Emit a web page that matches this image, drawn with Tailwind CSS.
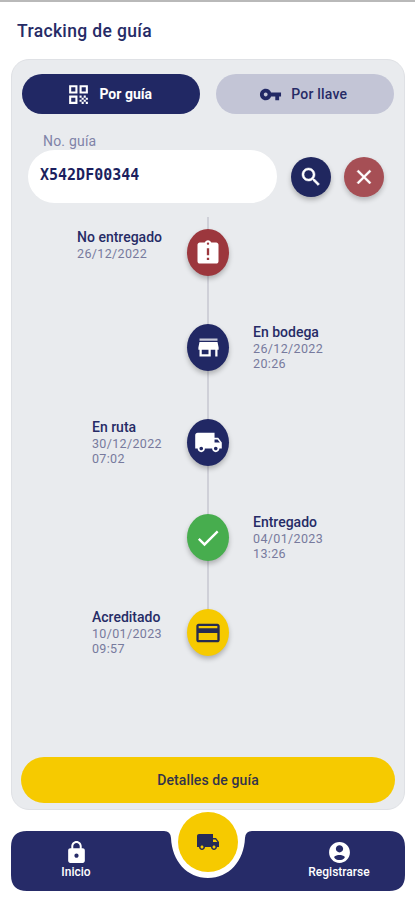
<!DOCTYPE html>
<html lang="es">
<head>
<meta charset="utf-8">
<meta name="viewport" content="width=device-width, initial-scale=1">
<title>Tracking de guía</title>
<script src="https://cdn.jsdelivr.net/npm/@tailwindcss/browser@4"></script>
</head>
<body class="bg-white">
<div class="flex h-[900px] w-[415px] flex-col overflow-hidden border-t-2 border-[#b9b9b9] bg-white font-[Roboto,sans-serif] text-[#262b66]">
  <header class="flex h-[57px] shrink-0 items-center pt-px pl-[17px]">
    <h1 class="text-[17.5px] leading-5 font-medium tracking-[0.35px] whitespace-nowrap">Tracking de guía</h1>
  </header>

  <main class="mx-[11px] flex h-[751px] w-[394px] shrink-0 flex-col rounded-[18px] border border-[#dfe1e5] bg-[#e9ebee] px-[10px] pt-[14px] pb-[6px]">
    <div class="flex gap-4">
      <button class="flex h-10 w-[178px] items-center justify-center gap-2 rounded-full bg-[#212864] pr-[3px] text-[14px] font-bold text-white">
        <svg class="size-[25px]" viewBox="0 0 24 24" fill="currentColor"><path d="M3 11h8V3H3v8zm2-6h4v4H5V5zM3 21h8v-8H3v8zm2-6h4v4H5v-4zM13 3v8h8V3h-8zm6 6h-4V5h4v4zM19 19h2v2h-2zM13 13h2v2h-2zM15 15h2v2h-2zM13 17h2v2h-2zM15 19h2v2h-2zM17 17h2v2h-2zM17 13h2v2h-2zM19 15h2v2h-2z"/></svg>
        <span>Por guía</span>
      </button>
      <button class="flex h-10 w-[179px] items-center justify-center gap-[9px] rounded-full bg-[#c3c5d6] pr-[3px] text-[14px] font-medium tracking-[0.2px]">
        <svg class="size-[23px]" viewBox="0 0 24 24" fill="#212864"><path d="M12.65 10C11.83 7.67 9.61 6 7 6c-3.31 0-6 2.69-6 6s2.69 6 6 6c2.61 0 4.83-1.67 5.65-4H17v4h4v-4h2v-4H12.65zM7 14c-1.100 0-2-.9-2-2s.9-2 2-2 2 .9 2 2-.9 2-2 2z"/></svg>
        <span>Por llave</span>
      </button>
    </div>

    <label class="mt-[19px] mb-px ml-[21px] text-[14px] leading-4 tracking-[0.2px] text-[#8083a8]">No. guía</label>
    <div class="ml-[6px] flex items-center">
      <div class="flex h-[53px] w-[249px] items-center rounded-full bg-white pb-[2px] pl-3 font-['DejaVu_Sans_Mono',monospace] text-[15px] font-bold text-[#1b1f5e]">X542DF00344</div>
      <button class="ml-[14px] flex size-10 items-center justify-center rounded-full bg-[#20275f] text-white shadow-[0_3px_5px_rgba(0,0,0,0.25)]">
        <svg class="size-6" viewBox="0 0 24 24" fill="currentColor" stroke="currentColor" stroke-width=".5"><path d="M15.500 14h-.79l-.28-.27C15.410 12.590 16 11.110 16 9.500 16 5.910 13.090 3 9.500 3S3 5.910 3 9.500 5.910 16 9.500 16c1.610 0 3.090-.59 4.230-1.570l.27.28v.79l5 4.990L20.490 19l-4.990-5zm-6 0C7.010 14 5 11.990 5 9.500S7.010 5 9.500 5 14 7.010 14 9.500 11.990 14 9.500 14z"/></svg>
      </button>
      <button class="ml-[13px] flex size-10 items-center justify-center rounded-full bg-[#a64f55] text-white shadow-[0_3px_5px_rgba(0,0,0,0.22)]">
        <svg class="size-6" viewBox="0 0 24 24" fill="currentColor" stroke="currentColor" stroke-width=".4"><path d="M19 6.410L17.590 5 12 10.590 6.410 5 5 6.410 10.590 12 5 17.590 6.410 19 12 13.410 17.590 19 19 17.590 13.410 12 19 6.410z"/></svg>
      </button>
    </div>

    <section class="relative mt-[14px] flex flex-col text-[12.500px] leading-[15.500px]">
      <div class="absolute top-0 left-[185px] h-[415px] w-[2px] bg-[#cfd0d8]"></div>

      <div class="relative mt-3 grid h-[95px] grid-cols-[140px_42px_1fr] items-start gap-x-[25px]">
        <div class="justify-self-end pt-px">
          <p class="text-[14px] font-medium">No entregado</p>
          <p class="tracking-[0.35px] text-[#777a9d]">26/12/2022</p>
        </div>
        <div class="flex h-[47px] items-center justify-center rounded-[50%] bg-[#9c373d] shadow-[0_3px_5px_rgba(0,0,0,0.25)]">
          <svg class="size-7" viewBox="0 0 24 24" fill="#fff"><path d="M19 3h-4.180C14.400 1.840 13.300 1 12 1c-1.300 0-2.400.84-2.820 2H5c-1.100 0-2 .9-2 2v14c0 1.100.9 2 2 2h14c1.100 0 2-.9 2-2V5c0-1.100-.9-2-2-2zm-6 15h-2v-2h2v2zm0-4h-2V8h2v6zm-1-9c-.55 0-1-.45-1-1s.45-1 1-1 1 .45 1 1-.45 1-1 1z"/></svg>
        </div>
      </div>

      <div class="relative grid h-[95px] grid-cols-[140px_42px_1fr] items-start gap-x-[25px]">
        <div></div>
        <div class="flex h-[47px] items-center justify-center rounded-[50%] bg-[#212864] shadow-[0_3px_5px_rgba(0,0,0,0.25)]">
          <svg class="size-[27px]" viewBox="0 0 24 24" fill="#fff"><path d="M4 4h16v2H4z" opacity=".75"/><path d="M21 14v-2l-1-5H4l-1 5v2h1v6h10v-6h4v6h2v-6h1zm-9 4H6v-4h6v4z"/></svg>
        </div>
        <div class="-ml-px pt-px">
          <p class="text-[14px] font-medium">En bodega</p>
          <p class="tracking-[0.35px] text-[#777a9d]">26/12/2022</p>
          <p class="tracking-[0.35px] text-[#777a9d]">20:26</p>
        </div>
      </div>

      <div class="relative grid h-[95px] grid-cols-[140px_42px_1fr] items-start gap-x-[25px]">
        <div class="justify-self-end pt-px">
          <p class="text-[14px] font-medium">En ruta</p>
          <p class="tracking-[0.35px] text-[#777a9d]">30/12/2022</p>
          <p class="tracking-[0.35px] text-[#777a9d]">07:02</p>
        </div>
        <div class="flex h-[47px] items-center justify-center rounded-[50%] bg-[#212864] shadow-[0_3px_5px_rgba(0,0,0,0.25)]">
          <svg class="size-[29px]" viewBox="0 0 24 24" fill="#fff"><path d="M20 8h-3V4H3c-1.100 0-2 .9-2 2v11h2c0 1.660 1.340 3 3 3s3-1.340 3-3h6c0 1.660 1.340 3 3 3s3-1.340 3-3h2v-5l-3-4zM6 18.500c-.83 0-1.500-.67-1.500-1.500s.67-1.500 1.500-1.500 1.500.67 1.500 1.500-.67 1.500-1.500 1.500zm13.500-9l1.960 2.500H17V9.500h2.500zm-1.500 9c-.83 0-1.500-.67-1.500-1.500s.67-1.500 1.500-1.500 1.500.67 1.500 1.500-.67 1.500-1.500 1.500z"/></svg>
        </div>
      </div>

      <div class="relative grid h-[95px] grid-cols-[140px_42px_1fr] items-start gap-x-[25px]">
        <div></div>
        <div class="flex h-[47px] items-center justify-center rounded-[50%] bg-[#47ad4e] shadow-[0_3px_5px_rgba(0,0,0,0.25)]">
          <svg class="size-7" viewBox="0 0 24 24" fill="#fff"><path d="M9 16.170L4.830 12l-1.420 1.410L9 19 21 7l-1.410-1.410z"/></svg>
        </div>
        <div class="-ml-px pt-px">
          <p class="text-[14px] font-medium">Entregado</p>
          <p class="tracking-[0.35px] text-[#777a9d]">04/01/2023</p>
          <p class="tracking-[0.35px] text-[#777a9d]">13:26</p>
        </div>
      </div>

      <div class="relative grid h-[47px] grid-cols-[140px_42px_1fr] items-start gap-x-[25px]">
        <div class="justify-self-end pt-px">
          <p class="text-[14px] font-medium">Acreditado</p>
          <p class="tracking-[0.35px] text-[#777a9d]">10/01/2023</p>
          <p class="tracking-[0.35px] text-[#777a9d]">09:57</p>
        </div>
        <div class="flex h-[47px] items-center justify-center rounded-[50%] bg-[#f6ca00] shadow-[0_3px_5px_rgba(0,0,0,0.25)]">
          <svg class="size-7" viewBox="0 0 24 24" fill="#262b50"><path d="M20 4H4c-1.110 0-1.990.89-1.990 2L2 18c0 1.110.89 2 2 2h16c1.110 0 2-.89 2-2V6c0-1.110-.89-2-2-2zm0 14H4v-6h16v6zm0-10H4V6h16v2z"/></svg>
        </div>
      </div>
    </section>

    <button class="mt-auto h-[46px] w-[374px] -ml-px rounded-full bg-[#f6ca00] text-[14px] font-medium tracking-[0.1px] text-[#33344a]">Detalles de guía</button>
  </main>

  <nav class="relative mx-[11px] mt-[21px] flex h-[60px] w-[394px] shrink-0 justify-between text-[12px] leading-[14px] font-medium text-white">
    <svg class="absolute inset-0 h-[60px] w-[394px]" viewBox="0 0 394 60" fill="#262b68"><path d="M16 0H153Q159.500 0 160 7C161 30 176 47 197 47S233 30 234 7Q234.500 0 241 0H378Q394 0 394 16V44Q394 60 378 60H16Q0 60 0 44V16Q0 0 16 0Z"/></svg>
    <a class="relative flex w-[130px] flex-col items-center pt-[9px]">
      <svg class="size-[25px]" viewBox="0 0 24 24" fill="currentColor"><path d="M18 8h-1V6c0-2.760-2.240-5-5-5S7 3.240 7 6v2H6c-1.100 0-2 .9-2 2v10c0 1.100.9 2 2 2h12c1.100 0 2-.9 2-2V10c0-1.100-.9-2-2-2zm-6 9c-1.100 0-2-.9-2-2s.9-2 2-2 2 .9 2 2-.9 2-2 2zm3.100-9H8.900V6c0-1.710 1.390-3.100 3.100-3.100 1.710 0 3.100 1.390 3.100 3.100v2z"/></svg>
      <span>Inicio</span>
    </a>
    <a class="absolute top-[-19px] left-[167px] flex size-[60px] items-center justify-center rounded-full bg-[#f6ca00]">
      <svg class="size-6" viewBox="0 0 24 24" fill="#262b58"><path d="M20 8h-3V4H3c-1.100 0-2 .9-2 2v11h2c0 1.660 1.340 3 3 3s3-1.340 3-3h6c0 1.660 1.340 3 3 3s3-1.340 3-3h2v-5l-3-4zM6 18.500c-.83 0-1.500-.67-1.500-1.500s.67-1.500 1.500-1.500 1.500.67 1.500 1.500-.67 1.500-1.500 1.500zm13.500-9l1.960 2.500H17V9.500h2.500zm-1.500 9c-.83 0-1.500-.67-1.500-1.500s.67-1.500 1.500-1.500 1.500.67 1.500 1.500-.67 1.500-1.500 1.500z"/></svg>
    </a>
    <a class="relative flex w-[132px] flex-col items-center pt-[9px]">
      <svg class="size-[25px]" viewBox="0 0 24 24" fill="currentColor"><path d="M12 2C6.480 2 2 6.480 2 12s4.480 10 10 10 10-4.480 10-10S17.520 2 12 2zm0 3c1.930 0 3.500 1.570 3.500 3.500S13.930 12 12 12s-3.500-1.570-3.500-3.500S10.070 5 12 5zm0 14.200c-2.030 0-4.430-.82-5.250-3 1.400-1.100 3.330-1.700 5.250-1.700s3.850.6 5.250 1.700c-.82 2.180-3.220 3-5.250 3z"/></svg>
      <span>Registrarse</span>
    </a>
  </nav>
</div>
</body>
</html>
